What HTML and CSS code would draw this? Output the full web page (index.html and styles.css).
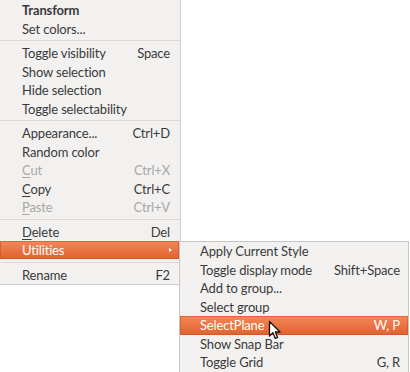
FILE: index.html
```html
<!DOCTYPE html>
<html>
<head>
<meta charset="utf-8">
<link rel="stylesheet" href="styles.css">
</head>
<body>
<div class="screen">
  <div class="menu main">
    <div class="item bold"><span>Transform</span></div>
    <div class="item"><span>Set colors...</span></div>
    <div class="sep"></div>
    <div class="item"><span>Toggle visibility</span><span class="accel">Space</span></div>
    <div class="item"><span>Show selection</span></div>
    <div class="item"><span>Hide selection</span></div>
    <div class="item"><span>Toggle selectability</span></div>
    <div class="sep"></div>
    <div class="item"><span>Appearance...</span><span class="accel">Ctrl+D</span></div>
    <div class="item"><span>Random color</span></div>
    <div class="item disabled"><span><u>C</u>ut</span><span class="accel">Ctrl+X</span></div>
    <div class="item"><span><u>C</u>opy</span><span class="accel">Ctrl+C</span></div>
    <div class="item disabled"><span><u>P</u>aste</span><span class="accel">Ctrl+V</span></div>
    <div class="sep"></div>
    <div class="item"><span><u>D</u>elete</span><span class="accel">Del</span></div>
    <div class="item active"><span>Utilities</span><span class="arrow"></span></div>
    <div class="sep"></div>
    <div class="item"><span>Rename</span><span class="accel">F2</span></div>
  </div>
  <div class="menu sub">
    <div class="item"><span>Apply Current Style</span></div>
    <div class="item"><span>Toggle display mode</span><span class="accel">Shift+Space</span></div>
    <div class="item"><span>Add to group...</span></div>
    <div class="item"><span>Select group</span></div>
    <div class="item active"><span>SelectPlane</span><span class="accel">W, P</span></div>
    <div class="item"><span>Show Snap Bar</span></div>
    <div class="item"><span>Toggle Grid</span><span class="accel">G, R</span></div>
  </div>
  <svg class="cursor" width="14" height="21" viewBox="0 0 14 21">
    <path d="M1.5 1.5 L1.5 16 L4.9 12.8 L7.3 18.4 L9.6 17.4 L7.3 12 L12 12 Z" fill="#ffffff" stroke="#111111" stroke-width="1.3" stroke-linejoin="round"/>
  </svg>
</div>
</body>
</html>
```

FILE: styles.css
```css
html, body {
  margin: 0;
  background: #ffffff;
}

.screen {
  position: relative;
  width: 410px;
  height: 372px;
  overflow: hidden;
  font-family: Lato, "Open Sans", sans-serif;
  font-size: 13px;
  letter-spacing: -0.15px;
  color: #3a3a3a;
}

.menu {
  background: #f2f1f0;
  box-sizing: border-box;
}

.main {
  width: 181px;
  padding-top: 0.75px;
  border-right: 1px solid #cfcecc;
  border-bottom: 1px solid #cfcecc;
}

.sub {
  position: absolute;
  left: 179px;
  top: 241px;
  width: 230px;
  border: 1px solid #c6c5c3;
}

.item {
  height: 18.5px;
  display: flex;
  align-items: center;
  justify-content: space-between;
  padding: 0 10px 0 22px;
  box-sizing: border-box;
  white-space: nowrap;
}

.sub .item {
  padding: 0 8px 0 20px;
}

.item u {
  text-decoration-thickness: 1px;
  text-underline-offset: 2px;
}

.bold {
  font-weight: bold;
}

.disabled {
  color: #a8a7a5;
}

.active {
  background: linear-gradient(#f4875a, #e1612d);
  color: #ffffff;
  box-shadow: inset 0 0 0 1px rgba(200, 80, 35, 0.55);
}

.main .active {
  margin-right: 1px;
}

.arrow {
  width: 0;
  height: 0;
  border-left: 3px solid #ffffff;
  border-top: 2.5px solid transparent;
  border-bottom: 2.5px solid transparent;
  margin-right: -3px;
}

.sep {
  height: 1px;
  margin: 2.5px 0;
  background: #dad9d7;
}

.cursor {
  position: absolute;
  left: 268px;
  top: 320px;
}
```
